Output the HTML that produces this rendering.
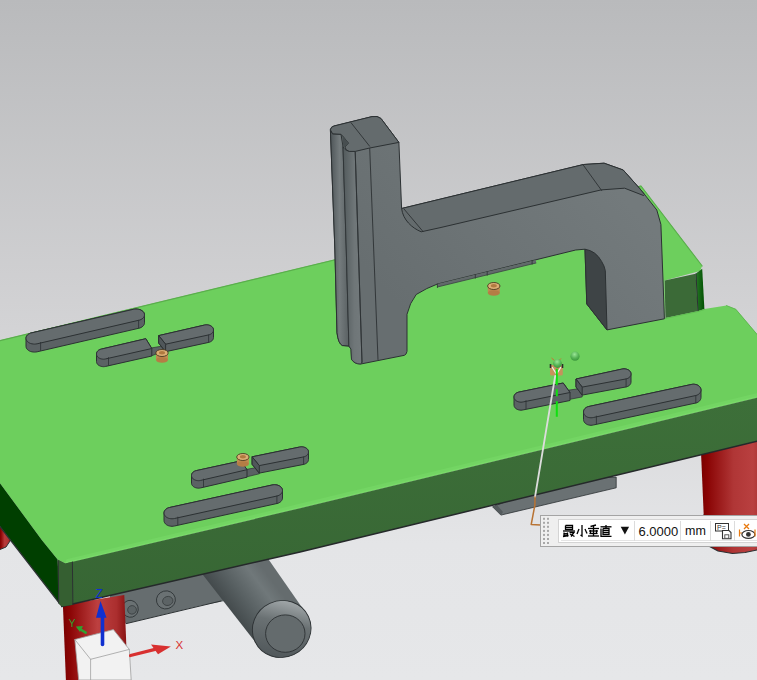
<!DOCTYPE html>
<html><head><meta charset="utf-8"><style>html,body{margin:0;padding:0;overflow:hidden;background:#d4d4d6}svg{display:block}</style></head>
<body><svg width="757" height="680" viewBox="0 0 757 680">
<defs>
<linearGradient id="bg" x1="0" y1="0" x2="0" y2="1">
<stop offset="0" stop-color="#b9babc"/><stop offset="0.5" stop-color="#d4d4d6"/><stop offset="0.8" stop-color="#e4e5e7"/><stop offset="1" stop-color="#e6e7e9"/></linearGradient>
<linearGradient id="red" x1="0" y1="0" x2="1" y2="0">
<stop offset="0" stop-color="#7e0000"/><stop offset="0.12" stop-color="#8e0808"/><stop offset="0.45" stop-color="#b83a3a"/><stop offset="0.8" stop-color="#b03434"/><stop offset="0.94" stop-color="#9a1a1a"/><stop offset="1" stop-color="#7a0000"/></linearGradient>
<linearGradient id="cyl" gradientUnits="userSpaceOnUse" x1="222" y1="614" x2="270" y2="578">
<stop offset="0" stop-color="#3a4042"/><stop offset="0.45" stop-color="#586062"/><stop offset="0.8" stop-color="#70787a"/><stop offset="1" stop-color="#656c6e"/></linearGradient>
<linearGradient id="cap" gradientUnits="userSpaceOnUse" x1="262" y1="652" x2="300" y2="604">
<stop offset="0" stop-color="#50575a"/><stop offset="0.6" stop-color="#6a7173"/><stop offset="1" stop-color="#a6acae"/></linearGradient>
<linearGradient id="stripA" x1="0" y1="0" x2="1" y2="0">
<stop offset="0" stop-color="#4e5558"/><stop offset="0.5" stop-color="#747b7d"/><stop offset="1" stop-color="#596062"/></linearGradient>
<linearGradient id="stripB" x1="0" y1="0" x2="1" y2="0">
<stop offset="0" stop-color="#525a5c"/><stop offset="0.6" stop-color="#6f7678"/><stop offset="1" stop-color="#737a7c"/></linearGradient>
<linearGradient id="frontface" x1="0" y1="0" x2="0" y2="1">
<stop offset="0" stop-color="#3d6f39"/><stop offset="1" stop-color="#376634"/></linearGradient>
<linearGradient id="narrow" x1="0" y1="0" x2="1" y2="0"><stop offset="0" stop-color="#2a7a2a"/><stop offset="1" stop-color="#005000"/></linearGradient>
<linearGradient id="band" x1="0" y1="1" x2="0" y2="0"><stop offset="0" stop-color="#7bdc6b"/><stop offset="1" stop-color="#6dcf5d"/></linearGradient>
<linearGradient id="armg" gradientUnits="userSpaceOnUse" x1="420" y1="330" x2="600" y2="170"><stop offset="0" stop-color="#676e70"/><stop offset="1" stop-color="#737a7c"/></linearGradient>
<radialGradient id="ball" cx="0.45" cy="0.3" r="0.7"><stop offset="0" stop-color="#9ae696"/><stop offset="0.6" stop-color="#56b456"/><stop offset="1" stop-color="#3a963a"/></radialGradient>
<linearGradient id="redL" gradientUnits="userSpaceOnUse" x1="63" y1="0" x2="126" y2="0"><stop offset="0" stop-color="#7a0000"/><stop offset="0.12" stop-color="#8c0606"/><stop offset="0.55" stop-color="#bd4040"/><stop offset="0.85" stop-color="#ab2e2e"/><stop offset="1" stop-color="#8a1414"/></linearGradient>
<linearGradient id="redR" gradientUnits="userSpaceOnUse" x1="701" y1="0" x2="766" y2="0"><stop offset="0" stop-color="#7a0000"/><stop offset="0.1" stop-color="#8a0404"/><stop offset="0.5" stop-color="#b03636"/><stop offset="0.8" stop-color="#b94040"/><stop offset="1" stop-color="#a02828"/></linearGradient>
</defs>
<rect width="757" height="680" fill="url(#bg)"/>
<polygon points="0.0,527.0 4.0,531.0 10.3,540.6 6.0,547.0 0.0,549.5" fill="url(#red)" stroke="none" stroke-width="1" stroke-linejoin="round" />
<polyline points="10.3,540.6 6.0,547.0 0.0,549.5" fill="none" stroke="#2c3133" stroke-width="1" stroke-linejoin="round" stroke-linecap="round" />
<g>
<polygon points="701.0,452.0 757.0,440.0 757.0,550.0 745.0,552.5 732.5,553.5 718.0,551.0 708.7,546.0 703.7,515.0" fill="url(#redR)" stroke="none" stroke-width="1" stroke-linejoin="round" />
<polyline points="703.7,515.0 708.7,546.0 718.0,551.0 732.5,553.5 745.0,552.5 757.0,550.0" fill="none" stroke="#2c3133" stroke-width="1.2" stroke-linejoin="round" stroke-linecap="round" />
</g>
<polygon points="110.0,590.0 240.0,566.0 240.0,598.0 200.0,605.8 126.3,623.6 110.0,623.0" fill="#666d6f" stroke="none" stroke-width="1" stroke-linejoin="round" />
<ellipse cx="130.2" cy="608.8" rx="8" ry="8.5" transform="rotate(-15 130.2 608.8)" fill="#6a7173" stroke="#2c3133" stroke-width="0.8"/>
<ellipse cx="131.7" cy="610.3" rx="4.4" ry="4.25" transform="rotate(-15 130.2 608.8)" fill="#5c6365" stroke="#2c3133" stroke-width="0.6"/>
<ellipse cx="165.9" cy="599.9" rx="9.5" ry="9" transform="rotate(-15 165.9 599.9)" fill="#6a7173" stroke="#2c3133" stroke-width="0.8"/>
<ellipse cx="167.4" cy="601.4" rx="5.2250000000000005" ry="4.5" transform="rotate(-15 165.9 599.9)" fill="#5c6365" stroke="#2c3133" stroke-width="0.6"/>
<polyline points="126.3,623.6 221.0,601.0" fill="none" stroke="#2c3133" stroke-width="1" stroke-linejoin="round" stroke-linecap="round" />
<polygon points="62.9,604.8 124.3,594.9 126.3,644.4 126.3,680.0 65.9,680.0" fill="url(#redL)" stroke="none" stroke-width="1" stroke-linejoin="round" />
<polygon points="196.0,566.0 262.0,550.0 304.8,611.5 258.6,646.4" fill="url(#cyl)" stroke="none" stroke-width="1" stroke-linejoin="round" />
<ellipse cx="281.7" cy="629" rx="29.5" ry="28.3" transform="rotate(-25 281.7 629)" fill="url(#cap)" stroke="#2c3133" stroke-width="0.9"/>
<ellipse cx="285.3" cy="633.6" rx="19.7" ry="18.7" fill="#646b6d" stroke="#2c3133" stroke-width="0.9"/>
<polygon points="492.6,506.8 500.9,515.1 616.2,487.8 616.2,477.1 560.0,480.0" fill="#6a7173" stroke="#2c3133" stroke-width="0.8" stroke-linejoin="round" />
<polygon points="492.6,506.8 500.9,515.1 503.0,512.0 497.0,505.0" fill="#545b5d" stroke="none" stroke-width="1" stroke-linejoin="round" />
<polygon points="0.0,340.2 641.0,185.5 702.2,265.7 700.0,270.9 664.7,280.4 665.0,318.0 697.8,311.3 704.4,309.1 726.5,305.4 735.8,309.0 757.0,334.1 757.0,397.8 300.0,508.3 100.0,555.3 65.3,563.5 57.6,559.4 41.8,540.0 0.0,483.2" fill="#6dcf5d" stroke="none" stroke-width="1" stroke-linejoin="round" />
<polyline points="68.0,561.0 300.0,505.8 757.0,395.3" fill="none" stroke="#73d563" stroke-width="4" stroke-linejoin="round" stroke-linecap="round" />
<polyline points="66.0,562.8 300.0,507.5 757.0,397.0" fill="none" stroke="#7ada6a" stroke-width="1.5" stroke-linejoin="round" stroke-linecap="round" />
<polyline points="0.0,340.6 641.0,186.0 702.2,266.0" fill="none" stroke="#5aae4c" stroke-width="1.1" stroke-linejoin="round" stroke-linecap="round" />
<polyline points="726.5,305.6 735.8,309.3 757.0,334.4" fill="none" stroke="#5eb550" stroke-width="0.9" stroke-linejoin="round" stroke-linecap="round" />
<polygon points="0.0,483.2 41.8,540.0 57.6,559.4 60.0,604.1 30.0,565.3 0.0,526.6" fill="#003f00" stroke="none" stroke-width="1" stroke-linejoin="round" />
<polyline points="0.0,526.6 30.0,565.3 60.0,604.1 62.0,606.0" fill="none" stroke="#2c3133" stroke-width="1.3" stroke-linejoin="round" stroke-linecap="round" />
<polygon points="57.6,559.4 65.3,563.5 300.0,508.3 757.0,397.8 757.0,441.2 300.0,551.9 61.8,606.5" fill="url(#frontface)" stroke="none" stroke-width="1" stroke-linejoin="round" />
<polyline points="61.8,606.5 300.0,551.9 757.0,441.2" fill="none" stroke="#25292a" stroke-width="1.5" stroke-linejoin="round" stroke-linecap="round" />
<polygon points="57.6,559.4 65.3,563.5 72.4,561.8 72.4,605.0 61.8,606.5 58.2,603.0" fill="#355f31" stroke="none" stroke-width="1" stroke-linejoin="round" />
<polyline points="58.2,561.0 58.7,603.0" fill="none" stroke="#2c3133" stroke-width="1" stroke-linejoin="round" stroke-linecap="round" />
<polyline points="72.4,562.0 72.9,604.5" fill="none" stroke="#2c3133" stroke-width="1" stroke-linejoin="round" stroke-linecap="round" />
<polygon points="664.7,280.4 695.6,273.8 697.8,311.3 665.4,318.0" fill="#3b6a37" stroke="none" stroke-width="1" stroke-linejoin="round" />
<polygon points="695.6,273.8 702.2,268.7 704.4,309.1 697.8,311.3" fill="url(#narrow)" stroke="none" stroke-width="1" stroke-linejoin="round" />
<polyline points="696.0,274.0 698.0,311.0" fill="none" stroke="#2c3133" stroke-width="1" stroke-linejoin="round" stroke-linecap="round" />
<polyline points="665.0,318.5 698.0,311.5 704.4,309.5" fill="none" stroke="#5fbf50" stroke-width="1" stroke-linejoin="round" stroke-linecap="round" />
<path d="M330.4,129.8 Q331,126.5 334,126 L372,116.6 Q377.5,115.5 381,118.5 L398.9,142.4 L401.6,208.5 L583.5,164.5 L604.1,163.2 L623.2,170 L639.4,188.2 L644.5,194.4 L656.8,210 L660.9,224.4 L663,280 L664.4,318.8 L607,329.9 L586.8,304 L585,249.2 L575.7,250 L437.4,284 Q426.8,287.9 416.2,294.5 Q409.6,303 407,314.3 L407,351.3 Q406.5,354.5 404.4,355.3 L360.8,364 Q354.2,364 351.5,359.3 L351,349.2 L348.9,346 L342.3,345.5 Q338.3,343.5 337,332.8 L334.9,250 Z" fill="url(#armg)" stroke="#2c3133" stroke-width="1" stroke-linejoin="round"/>
<path d="M401.6,208.5 L583.5,164.5 L604.1,163.2 L623.2,170 L639.4,188.2 L644.5,194.4 L643.7,195.6 L624.6,188.2 L601.2,189.9 L440,227.7 L421.2,231.8 C412,228 403,220 401.6,208.5 Z" fill="#646b6d" stroke="#2c3133" stroke-width="1" stroke-linejoin="round"/>
<polyline points="582.7,164.3 601.7,190.6" fill="none" stroke="#2c3133" stroke-width="0.9" stroke-linejoin="round" stroke-linecap="round" />
<polyline points="404.0,209.0 423.0,231.5" fill="none" stroke="#2c3133" stroke-width="0.9" stroke-linejoin="round" stroke-linecap="round" />
<path d="M585,249.2 Q596,251 601.6,261.4 Q604.5,266 605.3,270.7 L607,329.9 L586.8,304 Z" fill="#3e4446" stroke="#2c3133" stroke-width="1" stroke-linejoin="round"/>
<polygon points="437.4,284.0 536.0,260.0 536.0,263.0 437.4,287.0" fill="#62696b" stroke="none" stroke-width="1" stroke-linejoin="round" />
<polyline points="437.4,287.0 536.0,263.0" fill="none" stroke="#3a4042" stroke-width="0.8" stroke-linejoin="round" stroke-linecap="round" />
<polyline points="437.4,284.0 437.4,287.5" fill="none" stroke="#2c3133" stroke-width="0.8" stroke-linejoin="round" stroke-linecap="round" />
<polyline points="475.3,274.7 475.3,278.2" fill="none" stroke="#2c3133" stroke-width="0.8" stroke-linejoin="round" stroke-linecap="round" />
<polyline points="487.2,271.8 487.2,275.3" fill="none" stroke="#2c3133" stroke-width="0.8" stroke-linejoin="round" stroke-linecap="round" />
<polyline points="532.1,260.7 532.1,264.2" fill="none" stroke="#2c3133" stroke-width="0.8" stroke-linejoin="round" stroke-linecap="round" />
<path d="M330.4,129.8 L332.6,133.8 L341,134.3 L343,146.5 L346.3,250 L348.9,346 L342.3,345.5 Q338.3,343.5 337,332.8 L334.9,250 Z" fill="url(#stripA)" stroke="#2c3133" stroke-width="1" stroke-linejoin="round"/>
<path d="M343,146.5 Q344,150 349.3,151.4 L355.2,151.5 L362,362 L360.8,364 Q354.2,364 351.5,359.3 L351,349.2 L348.9,346 L346.3,250 Z" fill="url(#stripB)" stroke="#2c3133" stroke-width="0.8" stroke-linejoin="round"/>
<polyline points="355.2,151.5 362.0,362.5" fill="none" stroke="#2c3133" stroke-width="0.9" stroke-linejoin="round" stroke-linecap="round" />
<polyline points="369.7,148.0 378.0,359.5" fill="none" stroke="#2c3133" stroke-width="0.9" stroke-linejoin="round" stroke-linecap="round" />
<path d="M330.4,129.8 Q331,126.5 334,126 L372,116.6 Q377.5,115.5 381,118.5 L398.9,142.4 L369.7,148 L355.2,151.4 L349.3,151.4 Q345.5,150.5 344.9,147 L348.5,143.1 L342.3,135.6 L341,134.3 L332.6,133.8 Z" fill="#646b6d" stroke="#2c3133" stroke-width="1" stroke-linejoin="round"/>
<polygon points="342.3,135.6 348.5,143.1 344.9,147.0 343.0,146.5" fill="#474e50" stroke="none" stroke-width="1" stroke-linejoin="round" />
<polyline points="351.1,122.8 369.6,146.2" fill="none" stroke="#2c3133" stroke-width="0.9" stroke-linejoin="round" stroke-linecap="round" />
<polygon points="26.0,338.3 26.1,337.4 26.4,336.5 26.9,335.7 27.6,334.9 28.5,334.2 29.5,333.6 30.6,333.1 31.9,332.8 133.4,309.3 134.7,309.1 136.0,309.0 137.3,309.1 138.6,309.3 139.9,309.6 141.0,310.1 142.0,310.7 142.9,311.4 143.6,312.2 144.1,313.0 144.4,313.9 144.5,314.8 144.5,322.8 144.4,323.7 144.1,324.6 143.6,325.4 142.9,326.2 142.0,326.9 141.0,327.5 139.9,328.0 138.6,328.3 37.1,351.8 35.8,352.0 34.5,352.1 33.2,352.0 31.9,351.8 30.6,351.5 29.5,351.0 28.5,350.4 27.6,349.7 26.9,348.9 26.4,348.1 26.1,347.2 26.0,346.3" fill="#5b6264" stroke="#2c3133" stroke-width="1" stroke-linejoin="round" />
<polygon points="26.0,338.3 26.1,337.4 26.4,336.5 26.9,335.7 27.6,334.9 28.5,334.2 29.5,333.6 30.6,333.1 31.9,332.8 133.4,309.3 134.7,309.1 136.0,309.0 137.3,309.1 138.6,309.3 139.9,309.6 141.0,310.1 142.0,310.7 142.9,311.4 143.6,312.2 144.1,313.0 144.4,313.9 144.5,314.8 144.4,315.7 144.1,316.6 143.6,317.4 142.9,318.2 142.0,318.9 141.0,319.5 139.9,320.0 138.6,320.3 37.1,343.8 35.8,344.0 34.5,344.1 33.2,344.0 31.9,343.8 30.6,343.5 29.5,343.0 28.5,342.4 27.6,341.7 26.9,340.9 26.4,340.1 26.1,339.2" fill="#656c6e" stroke="#2c3133" stroke-width="1" stroke-linejoin="round" />
<polyline points="40.6,342.4 40.6,350.4" fill="none" stroke="#2c3133" stroke-width="0.8" stroke-linejoin="round" stroke-linecap="round" />
<polyline points="138.6,320.3 138.6,328.3" fill="none" stroke="#2c3133" stroke-width="0.8" stroke-linejoin="round" stroke-linecap="round" />
<polygon points="164.0,513.0 164.1,512.1 164.4,511.2 164.9,510.4 165.5,509.6 166.3,508.9 167.3,508.3 168.4,507.8 169.5,507.5 272.0,485.0 273.2,484.8 274.5,484.7 275.8,484.8 277.0,485.0 278.1,485.3 279.2,485.8 280.2,486.4 281.0,487.1 281.6,487.9 282.1,488.7 282.4,489.6 282.5,490.5 282.5,498.0 282.4,498.9 282.1,499.8 281.6,500.6 281.0,501.4 280.2,502.1 279.2,502.7 278.1,503.2 277.0,503.5 174.5,526.0 173.2,526.2 172.0,526.3 170.8,526.2 169.5,526.0 168.4,525.7 167.3,525.2 166.3,524.6 165.5,523.9 164.9,523.1 164.4,522.3 164.1,521.4 164.0,520.5" fill="#5b6264" stroke="#2c3133" stroke-width="1" stroke-linejoin="round" />
<polygon points="164.0,513.0 164.1,512.1 164.4,511.2 164.9,510.4 165.5,509.6 166.3,508.9 167.3,508.3 168.4,507.8 169.5,507.5 272.0,485.0 273.2,484.8 274.5,484.7 275.8,484.8 277.0,485.0 278.1,485.3 279.2,485.8 280.2,486.4 281.0,487.1 281.6,487.9 282.1,488.7 282.4,489.6 282.5,490.5 282.4,491.4 282.1,492.3 281.6,493.1 281.0,493.9 280.2,494.6 279.2,495.2 278.1,495.7 277.0,496.0 174.5,518.5 173.2,518.7 172.0,518.8 170.8,518.7 169.5,518.5 168.4,518.2 167.3,517.7 166.3,517.1 165.5,516.4 164.9,515.6 164.4,514.8 164.1,513.9" fill="#656c6e" stroke="#2c3133" stroke-width="1" stroke-linejoin="round" />
<polyline points="177.8,517.1 177.8,524.6" fill="none" stroke="#2c3133" stroke-width="0.8" stroke-linejoin="round" stroke-linecap="round" />
<polyline points="276.9,496.0 276.9,503.5" fill="none" stroke="#2c3133" stroke-width="0.8" stroke-linejoin="round" stroke-linecap="round" />
<polygon points="583.5,412.0 583.6,411.1 583.9,410.2 584.3,409.4 584.9,408.6 585.7,407.9 586.6,407.3 587.6,406.8 588.7,406.5 691.2,384.5 692.3,384.3 693.5,384.2 694.7,384.3 695.8,384.5 696.9,384.8 697.9,385.3 698.8,385.9 699.6,386.6 700.2,387.4 700.6,388.2 700.9,389.1 701.0,390.0 701.0,397.5 700.9,398.4 700.6,399.3 700.2,400.1 699.6,400.9 698.8,401.6 697.9,402.2 696.9,402.7 695.8,403.0 593.3,425.0 592.2,425.2 591.0,425.3 589.8,425.2 588.7,425.0 587.6,424.7 586.6,424.2 585.7,423.6 584.9,422.9 584.3,422.1 583.9,421.3 583.6,420.4 583.5,419.5" fill="#5b6264" stroke="#2c3133" stroke-width="1" stroke-linejoin="round" />
<polygon points="583.5,412.0 583.6,411.1 583.9,410.2 584.3,409.4 584.9,408.6 585.7,407.9 586.6,407.3 587.6,406.8 588.7,406.5 691.2,384.5 692.3,384.3 693.5,384.2 694.7,384.3 695.8,384.5 696.9,384.8 697.9,385.3 698.8,385.9 699.6,386.6 700.2,387.4 700.6,388.2 700.9,389.1 701.0,390.0 700.9,390.9 700.6,391.8 700.2,392.6 699.6,393.4 698.8,394.1 697.9,394.7 696.9,395.2 695.8,395.5 593.3,417.5 592.2,417.7 591.0,417.8 589.8,417.7 588.7,417.5 587.6,417.2 586.6,416.7 585.7,416.1 584.9,415.4 584.3,414.6 583.9,413.8 583.6,412.9" fill="#656c6e" stroke="#2c3133" stroke-width="1" stroke-linejoin="round" />
<polyline points="596.4,416.1 596.4,423.6" fill="none" stroke="#2c3133" stroke-width="0.8" stroke-linejoin="round" stroke-linecap="round" />
<polyline points="695.8,395.5 695.8,403.0" fill="none" stroke="#2c3133" stroke-width="0.8" stroke-linejoin="round" stroke-linecap="round" />
<polygon points="151.0,348.0 165.6,345.5 165.6,350.5 151.0,356.0" fill="#5a6163" stroke="#2c3133" stroke-width="0.7" stroke-linejoin="round" />
<polygon points="96.5,354.0 96.6,353.2 96.8,352.4 97.3,351.6 97.8,350.9 98.5,350.3 99.4,349.8 100.3,349.4 101.3,349.1 145.8,338.7 151.8,348.5 151.8,356.0 105.7,366.4 104.6,366.6 103.5,366.7 102.4,366.6 101.3,366.4 100.3,366.1 99.4,365.7 98.5,365.2 97.8,364.6 97.3,363.9 96.8,363.1 96.6,362.3 96.5,361.5" fill="#5b6264" stroke="#2c3133" stroke-width="1" stroke-linejoin="round" />
<polygon points="96.5,354.0 96.6,353.2 96.8,352.4 97.3,351.6 97.8,350.9 98.5,350.3 99.4,349.8 100.3,349.4 101.3,349.1 145.8,338.7 151.8,348.5 105.7,358.9 104.6,359.1 103.5,359.2 102.4,359.1 101.3,358.9 100.3,358.6 99.4,358.2 98.5,357.7 97.8,357.1 97.3,356.4 96.8,355.6 96.6,354.8" fill="#656c6e" stroke="#2c3133" stroke-width="1" stroke-linejoin="round" />
<polyline points="108.5,357.6 108.5,365.1" fill="none" stroke="#2c3133" stroke-width="0.8" stroke-linejoin="round" stroke-linecap="round" />
<polygon points="158.7,335.6 204.3,325.1 205.4,324.9 206.5,324.8 207.6,324.9 208.7,325.1 209.7,325.4 210.6,325.8 211.4,326.3 212.2,326.9 212.7,327.6 213.2,328.4 213.4,329.2 213.5,330.0 213.5,337.5 213.4,338.3 213.2,339.1 212.7,339.9 212.2,340.6 211.4,341.2 210.6,341.7 209.7,342.1 208.7,342.4 165.6,351.7 158.7,343.1" fill="#5b6264" stroke="#2c3133" stroke-width="1" stroke-linejoin="round" />
<polygon points="158.7,335.6 204.3,325.1 205.4,324.9 206.5,324.8 207.6,324.9 208.7,325.1 209.7,325.4 210.6,325.8 211.4,326.3 212.2,326.9 212.7,327.6 213.2,328.4 213.4,329.2 213.5,330.0 213.4,330.8 213.2,331.6 212.7,332.4 212.2,333.1 211.4,333.7 210.6,334.2 209.7,334.6 208.7,334.9 165.6,344.2" fill="#656c6e" stroke="#2c3133" stroke-width="1" stroke-linejoin="round" />
<polygon points="158.7,335.6 165.6,344.2 165.6,351.7 158.7,343.1" fill="#50575a" stroke="#2c3133" stroke-width="1" stroke-linejoin="round" />
<polyline points="208.6,334.9 208.6,342.4" fill="none" stroke="#2c3133" stroke-width="0.8" stroke-linejoin="round" stroke-linecap="round" />
<polygon points="246.0,469.5 259.3,467.0 259.3,473.8 246.0,477.0" fill="#5a6163" stroke="#2c3133" stroke-width="0.7" stroke-linejoin="round" />
<polygon points="191.5,475.5 191.6,474.7 191.8,473.9 192.3,473.1 192.8,472.4 193.6,471.8 194.4,471.3 195.3,470.9 196.3,470.6 240.9,460.9 247.0,469.7 247.0,477.2 200.7,487.9 199.6,488.1 198.5,488.2 197.4,488.1 196.3,487.9 195.3,487.6 194.4,487.2 193.6,486.7 192.8,486.1 192.3,485.4 191.8,484.6 191.6,483.8 191.5,483.0" fill="#5b6264" stroke="#2c3133" stroke-width="1" stroke-linejoin="round" />
<polygon points="191.5,475.5 191.6,474.7 191.8,473.9 192.3,473.1 192.8,472.4 193.6,471.8 194.4,471.3 195.3,470.9 196.3,470.6 240.9,460.9 247.0,469.7 200.7,480.4 199.6,480.6 198.5,480.7 197.4,480.6 196.3,480.4 195.3,480.1 194.4,479.7 193.6,479.2 192.8,478.6 192.3,477.9 191.8,477.1 191.6,476.3" fill="#656c6e" stroke="#2c3133" stroke-width="1" stroke-linejoin="round" />
<polyline points="203.5,479.1 203.5,486.6" fill="none" stroke="#2c3133" stroke-width="0.8" stroke-linejoin="round" stroke-linecap="round" />
<polygon points="252.1,456.8 299.3,447.1 300.4,446.9 301.5,446.8 302.6,446.9 303.7,447.1 304.7,447.4 305.6,447.8 306.4,448.3 307.2,448.9 307.7,449.6 308.2,450.4 308.4,451.2 308.5,452.0 308.5,459.5 308.4,460.3 308.2,461.1 307.7,461.9 307.2,462.6 306.4,463.2 305.6,463.7 304.7,464.1 303.7,464.4 259.3,473.1 252.1,464.3" fill="#5b6264" stroke="#2c3133" stroke-width="1" stroke-linejoin="round" />
<polygon points="252.1,456.8 299.3,447.1 300.4,446.9 301.5,446.8 302.6,446.9 303.7,447.1 304.7,447.4 305.6,447.8 306.4,448.3 307.2,448.9 307.7,449.6 308.2,450.4 308.4,451.2 308.5,452.0 308.4,452.8 308.2,453.6 307.7,454.4 307.2,455.1 306.4,455.7 305.6,456.2 304.7,456.6 303.7,456.9 259.3,465.6" fill="#656c6e" stroke="#2c3133" stroke-width="1" stroke-linejoin="round" />
<polygon points="252.1,456.8 259.3,465.6 259.3,473.1 252.1,464.3" fill="#50575a" stroke="#2c3133" stroke-width="1" stroke-linejoin="round" />
<polyline points="303.6,456.9 303.6,464.4" fill="none" stroke="#2c3133" stroke-width="0.8" stroke-linejoin="round" stroke-linecap="round" />
<polygon points="569.0,390.1 582.2,388.2 582.2,396.9 569.0,399.5" fill="#5a6163" stroke="#2c3133" stroke-width="0.7" stroke-linejoin="round" />
<polygon points="514.0,397.0 514.1,396.2 514.3,395.4 514.8,394.6 515.3,393.9 516.0,393.3 516.9,392.8 517.8,392.4 518.8,392.1 563.2,383.0 570.0,392.5 570.0,400.5 523.2,409.9 522.1,410.1 521.0,410.2 519.9,410.1 518.8,409.9 517.8,409.6 516.9,409.2 516.0,408.7 515.3,408.1 514.8,407.4 514.3,406.6 514.1,405.8 514.0,405.0" fill="#5b6264" stroke="#2c3133" stroke-width="1" stroke-linejoin="round" />
<polygon points="514.0,397.0 514.1,396.2 514.3,395.4 514.8,394.6 515.3,393.9 516.0,393.3 516.9,392.8 517.8,392.4 518.8,392.1 563.2,383.0 570.0,392.5 523.2,401.9 522.1,402.1 521.0,402.2 519.9,402.1 518.8,401.9 517.8,401.6 516.9,401.2 516.0,400.7 515.3,400.1 514.8,399.4 514.3,398.6 514.1,397.8" fill="#656c6e" stroke="#2c3133" stroke-width="1" stroke-linejoin="round" />
<polyline points="526.0,400.6 526.0,408.6" fill="none" stroke="#2c3133" stroke-width="0.8" stroke-linejoin="round" stroke-linecap="round" />
<polygon points="576.0,379.0 621.8,369.1 622.9,368.9 624.0,368.8 625.1,368.9 626.2,369.1 627.2,369.4 628.1,369.8 629.0,370.3 629.7,370.9 630.2,371.6 630.7,372.4 630.9,373.2 631.0,374.0 631.0,382.0 630.9,382.8 630.7,383.6 630.2,384.4 629.7,385.1 629.0,385.7 628.1,386.2 627.2,386.6 626.2,386.9 582.2,395.1 576.0,387.0" fill="#5b6264" stroke="#2c3133" stroke-width="1" stroke-linejoin="round" />
<polygon points="576.0,379.0 621.8,369.1 622.9,368.9 624.0,368.8 625.1,368.9 626.2,369.1 627.2,369.4 628.1,369.8 629.0,370.3 629.7,370.9 630.2,371.6 630.7,372.4 630.9,373.2 631.0,374.0 630.9,374.8 630.7,375.6 630.2,376.4 629.7,377.1 629.0,377.7 628.1,378.2 627.2,378.6 626.2,378.9 582.2,387.1" fill="#656c6e" stroke="#2c3133" stroke-width="1" stroke-linejoin="round" />
<polygon points="576.0,379.0 582.2,387.1 582.2,395.1 576.0,387.0" fill="#50575a" stroke="#2c3133" stroke-width="1" stroke-linejoin="round" />
<polyline points="626.1,378.9 626.1,386.9" fill="none" stroke="#2c3133" stroke-width="0.8" stroke-linejoin="round" stroke-linecap="round" />
<rect x="156" y="353" width="12" height="7" fill="#c08a50"/>
<ellipse cx="162" cy="360" rx="6" ry="2.8" fill="#b57d45"/>
<ellipse cx="162" cy="353" rx="6.2" ry="3.5" fill="#dcae74" stroke="#4a3a20" stroke-width="0.9"/>
<ellipse cx="162" cy="352.7" rx="3" ry="1.7" fill="#b07a40"/>
<rect x="236.9" y="457" width="12" height="7" fill="#c08a50"/>
<ellipse cx="242.9" cy="464" rx="6" ry="2.8" fill="#b57d45"/>
<ellipse cx="242.9" cy="457" rx="6.2" ry="3.5" fill="#dcae74" stroke="#4a3a20" stroke-width="0.9"/>
<ellipse cx="242.9" cy="456.7" rx="3" ry="1.7" fill="#b07a40"/>
<rect x="487.8" y="286" width="12" height="7" fill="#c08a50"/>
<ellipse cx="493.8" cy="293" rx="6" ry="2.8" fill="#b57d45"/>
<ellipse cx="493.8" cy="286" rx="6.2" ry="3.5" fill="#dcae74" stroke="#4a3a20" stroke-width="0.9"/>
<ellipse cx="493.8" cy="285.7" rx="3" ry="1.7" fill="#b07a40"/>
<rect x="550" y="365" width="12.8" height="10.5" rx="1.5" fill="#c6925c"/>
<path d="M552,367 L556.5,374 L561,367" fill="none" stroke="#f0f0f0" stroke-width="1.3"/>
<path d="M550.5,364 v4 M562.5,364 v4" stroke="#2a2a2a" stroke-width="1.6"/>
<path d="M551.5,358 l3,2.5 M561,358.5 l-2,2" stroke="#d07030" stroke-width="1"/>
<circle cx="575" cy="356.2" r="4.6" fill="url(#ball)"/>
<circle cx="557.5" cy="363.5" r="4.4" fill="url(#ball)"/>
<line x1="556.8" y1="368.8" x2="556.8" y2="416.8" stroke="#10e010" stroke-width="2" stroke-dasharray="16.5,4,7,5,16"/>
<polyline points="555.2,376.0 535.0,497.0" fill="none" stroke="#dcdcdc" stroke-width="1.8" stroke-linejoin="round" stroke-linecap="round" />
<polyline points="535.0,497.0 534.9,505.0 531.2,524.5 540.4,524.9" fill="none" stroke="#b87333" stroke-width="1.5" stroke-linejoin="round" stroke-linecap="round" />
<polygon points="74.8,639.5 113.4,629.6 129.3,649.4 131.2,680.0 78.7,680.0" fill="#f2f2f2" stroke="#a0a0a0" stroke-width="0.8" stroke-linejoin="round" />
<polyline points="74.8,639.5 90.6,659.3 129.3,649.4" fill="none" stroke="#a0a0a0" stroke-width="0.8" stroke-linejoin="round" stroke-linecap="round" />
<polyline points="90.6,659.3 90.6,680.0" fill="none" stroke="#a0a0a0" stroke-width="0.8" stroke-linejoin="round" stroke-linecap="round" />
<polyline points="102.5,644.4 102.5,613.0" fill="none" stroke="#1030d0" stroke-width="3.6" stroke-linejoin="round" stroke-linecap="round" />
<polygon points="96.0,617.7 106.5,617.7 100.5,600.9" fill="#1030d0" stroke="none" stroke-width="1" stroke-linejoin="round" />
<polyline points="130.5,655.5 155.0,649.4" fill="none" stroke="#d83030" stroke-width="3.2" stroke-linejoin="round" stroke-linecap="round" />
<polygon points="151.0,644.4 170.9,646.4 158.0,654.3" fill="#d83030" stroke="none" stroke-width="1" stroke-linejoin="round" />
<polyline points="85.7,632.6 79.0,628.5" fill="none" stroke="#30a030" stroke-width="2.6" stroke-linejoin="round" stroke-linecap="round" />
<polygon points="75.8,626.6 83.0,626.0 80.0,632.0" fill="#30a030" stroke="none" stroke-width="1" stroke-linejoin="round" />
<text x="95.5" y="597.5" font-family="Liberation Sans, sans-serif" font-size="12" fill="#1030d0">Z</text>
<text x="175.5" y="649" font-family="Liberation Sans, sans-serif" font-size="11.5" fill="#d83030">X</text>
<text x="68.5" y="627" font-family="Liberation Sans, sans-serif" font-size="10.5" fill="#30a030">Y</text>
<rect x="540.5" y="515.5" width="220" height="31" fill="#efefef" stroke="#a4a4a4" stroke-width="1"/>
<rect x="543" y="517.8" width="2" height="2" fill="#a8a8a8"/>
<rect x="547" y="517.8" width="2" height="2" fill="#a8a8a8"/>
<rect x="543" y="521.8" width="2" height="2" fill="#a8a8a8"/>
<rect x="547" y="521.8" width="2" height="2" fill="#a8a8a8"/>
<rect x="543" y="525.8" width="2" height="2" fill="#a8a8a8"/>
<rect x="547" y="525.8" width="2" height="2" fill="#a8a8a8"/>
<rect x="543" y="529.9" width="2" height="2" fill="#a8a8a8"/>
<rect x="547" y="529.9" width="2" height="2" fill="#a8a8a8"/>
<rect x="543" y="533.9" width="2" height="2" fill="#a8a8a8"/>
<rect x="547" y="533.9" width="2" height="2" fill="#a8a8a8"/>
<rect x="543" y="538" width="2" height="2" fill="#a8a8a8"/>
<rect x="547" y="538" width="2" height="2" fill="#a8a8a8"/>
<rect x="543" y="542" width="2" height="2" fill="#a8a8a8"/>
<rect x="547" y="542" width="2" height="2" fill="#a8a8a8"/>
<rect x="558.5" y="519.5" width="200" height="23" fill="#ffffff" stroke="#d4d4d4" stroke-width="1"/>
<line x1="561" y1="540.5" x2="757" y2="540.5" stroke="#e4e4e4" stroke-width="1"/>
<line x1="634.5" y1="521" x2="634.5" y2="541" stroke="#dcdcdc" stroke-width="1"/>
<line x1="680.5" y1="521" x2="680.5" y2="541" stroke="#dcdcdc" stroke-width="1"/>
<line x1="710.5" y1="521" x2="710.5" y2="541" stroke="#dcdcdc" stroke-width="1"/>
<line x1="734.5" y1="521" x2="734.5" y2="541" stroke="#dcdcdc" stroke-width="1"/>
<text x="638.5" y="536" font-family="Liberation Sans, sans-serif" font-size="13" fill="#111">6.0000</text>
<text x="685" y="534.8" font-family="Liberation Sans, sans-serif" font-size="12.5" fill="#111">mm</text>
<polygon points="620.7,526.7 629.1,526.7 624.9,534.5" fill="#111"/>
<polyline points="565.5,525.5 572.5,525.5 572.5,529.5 565.5,529.5 565.5,525.5" fill="none" stroke="#000" stroke-width="1.3"/><polyline points="565.5,527.5 572.5,527.5" fill="none" stroke="#000" stroke-width="1.3"/><polyline points="563.0,531.0 575.0,531.0" fill="none" stroke="#000" stroke-width="1.3"/><polyline points="564.0,532.5 564.0,536.0" fill="none" stroke="#000" stroke-width="1.3"/><polyline points="567.5,532.5 567.5,536.5" fill="none" stroke="#000" stroke-width="1.3"/><polyline points="564.0,533.7 567.5,533.7" fill="none" stroke="#000" stroke-width="1.3"/><polyline points="564.0,535.2 567.5,535.2" fill="none" stroke="#000" stroke-width="1.3"/><polyline points="563.0,536.5 568.5,535.5" fill="none" stroke="#000" stroke-width="1.3"/><polyline points="569.5,532.5 574.0,532.5 571.0,536.5" fill="none" stroke="#000" stroke-width="1.3"/><polyline points="570.0,534.0 574.5,536.5" fill="none" stroke="#000" stroke-width="1.3"/><polyline points="582.0,525.0 582.0,536.0 580.5,535.0" fill="none" stroke="#000" stroke-width="1.3"/><polyline points="579.0,529.0 577.0,534.0" fill="none" stroke="#000" stroke-width="1.3"/><polyline points="585.0,529.0 587.0,533.5" fill="none" stroke="#000" stroke-width="1.3"/><polyline points="596.0,525.0 590.5,526.5" fill="none" stroke="#000" stroke-width="1.3"/><polyline points="588.0,528.5 599.0,528.5" fill="none" stroke="#000" stroke-width="1.3"/><polyline points="593.5,526.0 593.5,536.0" fill="none" stroke="#000" stroke-width="1.3"/><polyline points="589.0,531.0 598.0,531.0" fill="none" stroke="#000" stroke-width="1.3"/><polyline points="590.5,530.0 590.5,534.0" fill="none" stroke="#000" stroke-width="1.3"/><polyline points="596.5,530.0 596.5,534.0" fill="none" stroke="#000" stroke-width="1.3"/><polyline points="589.5,533.5 597.5,533.5" fill="none" stroke="#000" stroke-width="1.3"/><polyline points="588.0,536.0 599.0,536.0" fill="none" stroke="#000" stroke-width="1.3"/><polyline points="600.5,526.8 611.5,526.8" fill="none" stroke="#000" stroke-width="1.3"/><polyline points="606.0,525.0 606.0,528.0" fill="none" stroke="#000" stroke-width="1.3"/><polyline points="603.0,528.5 609.0,528.5 609.0,534.5 603.0,534.5 603.0,528.5" fill="none" stroke="#000" stroke-width="1.3"/><polyline points="603.0,530.5 609.0,530.5" fill="none" stroke="#000" stroke-width="1.3"/><polyline points="603.0,532.5 609.0,532.5" fill="none" stroke="#000" stroke-width="1.3"/><polyline points="601.0,528.5 601.0,536.3 611.5,536.3" fill="none" stroke="#000" stroke-width="1.3"/>
<rect x="715.5" y="523.5" width="13" height="7.5" fill="#fff" stroke="#333" stroke-width="1"/>
<text x="717" y="530" font-family="Liberation Sans, sans-serif" font-size="7" fill="#333">P=</text>
<path d="M722.5,530.5 h6.5 l2,2 v6.3 h-8.5 z" fill="#fff" stroke="#333" stroke-width="1.1"/>
<rect x="724.8" y="534.8" width="4" height="3.5" fill="#fff" stroke="#444" stroke-width="0.9"/>
<path d="M744,524 l5,5 M749,524 l-5,5" stroke="#e87a10" stroke-width="1.3"/>
<path d="M739.5,529.5 v7 M739.5,533 h3" stroke="#e87a10" stroke-width="1.2" fill="none"/>
<ellipse cx="748.4" cy="534.4" rx="6.5" ry="3.9" fill="#fff" stroke="#333" stroke-width="1.2"/>
<circle cx="748.4" cy="534.4" r="2.4" fill="#333"/>
<line x1="755" y1="529.5" x2="755" y2="536.5" stroke="#e87a10" stroke-width="1.2"/>
</svg></body></html>
